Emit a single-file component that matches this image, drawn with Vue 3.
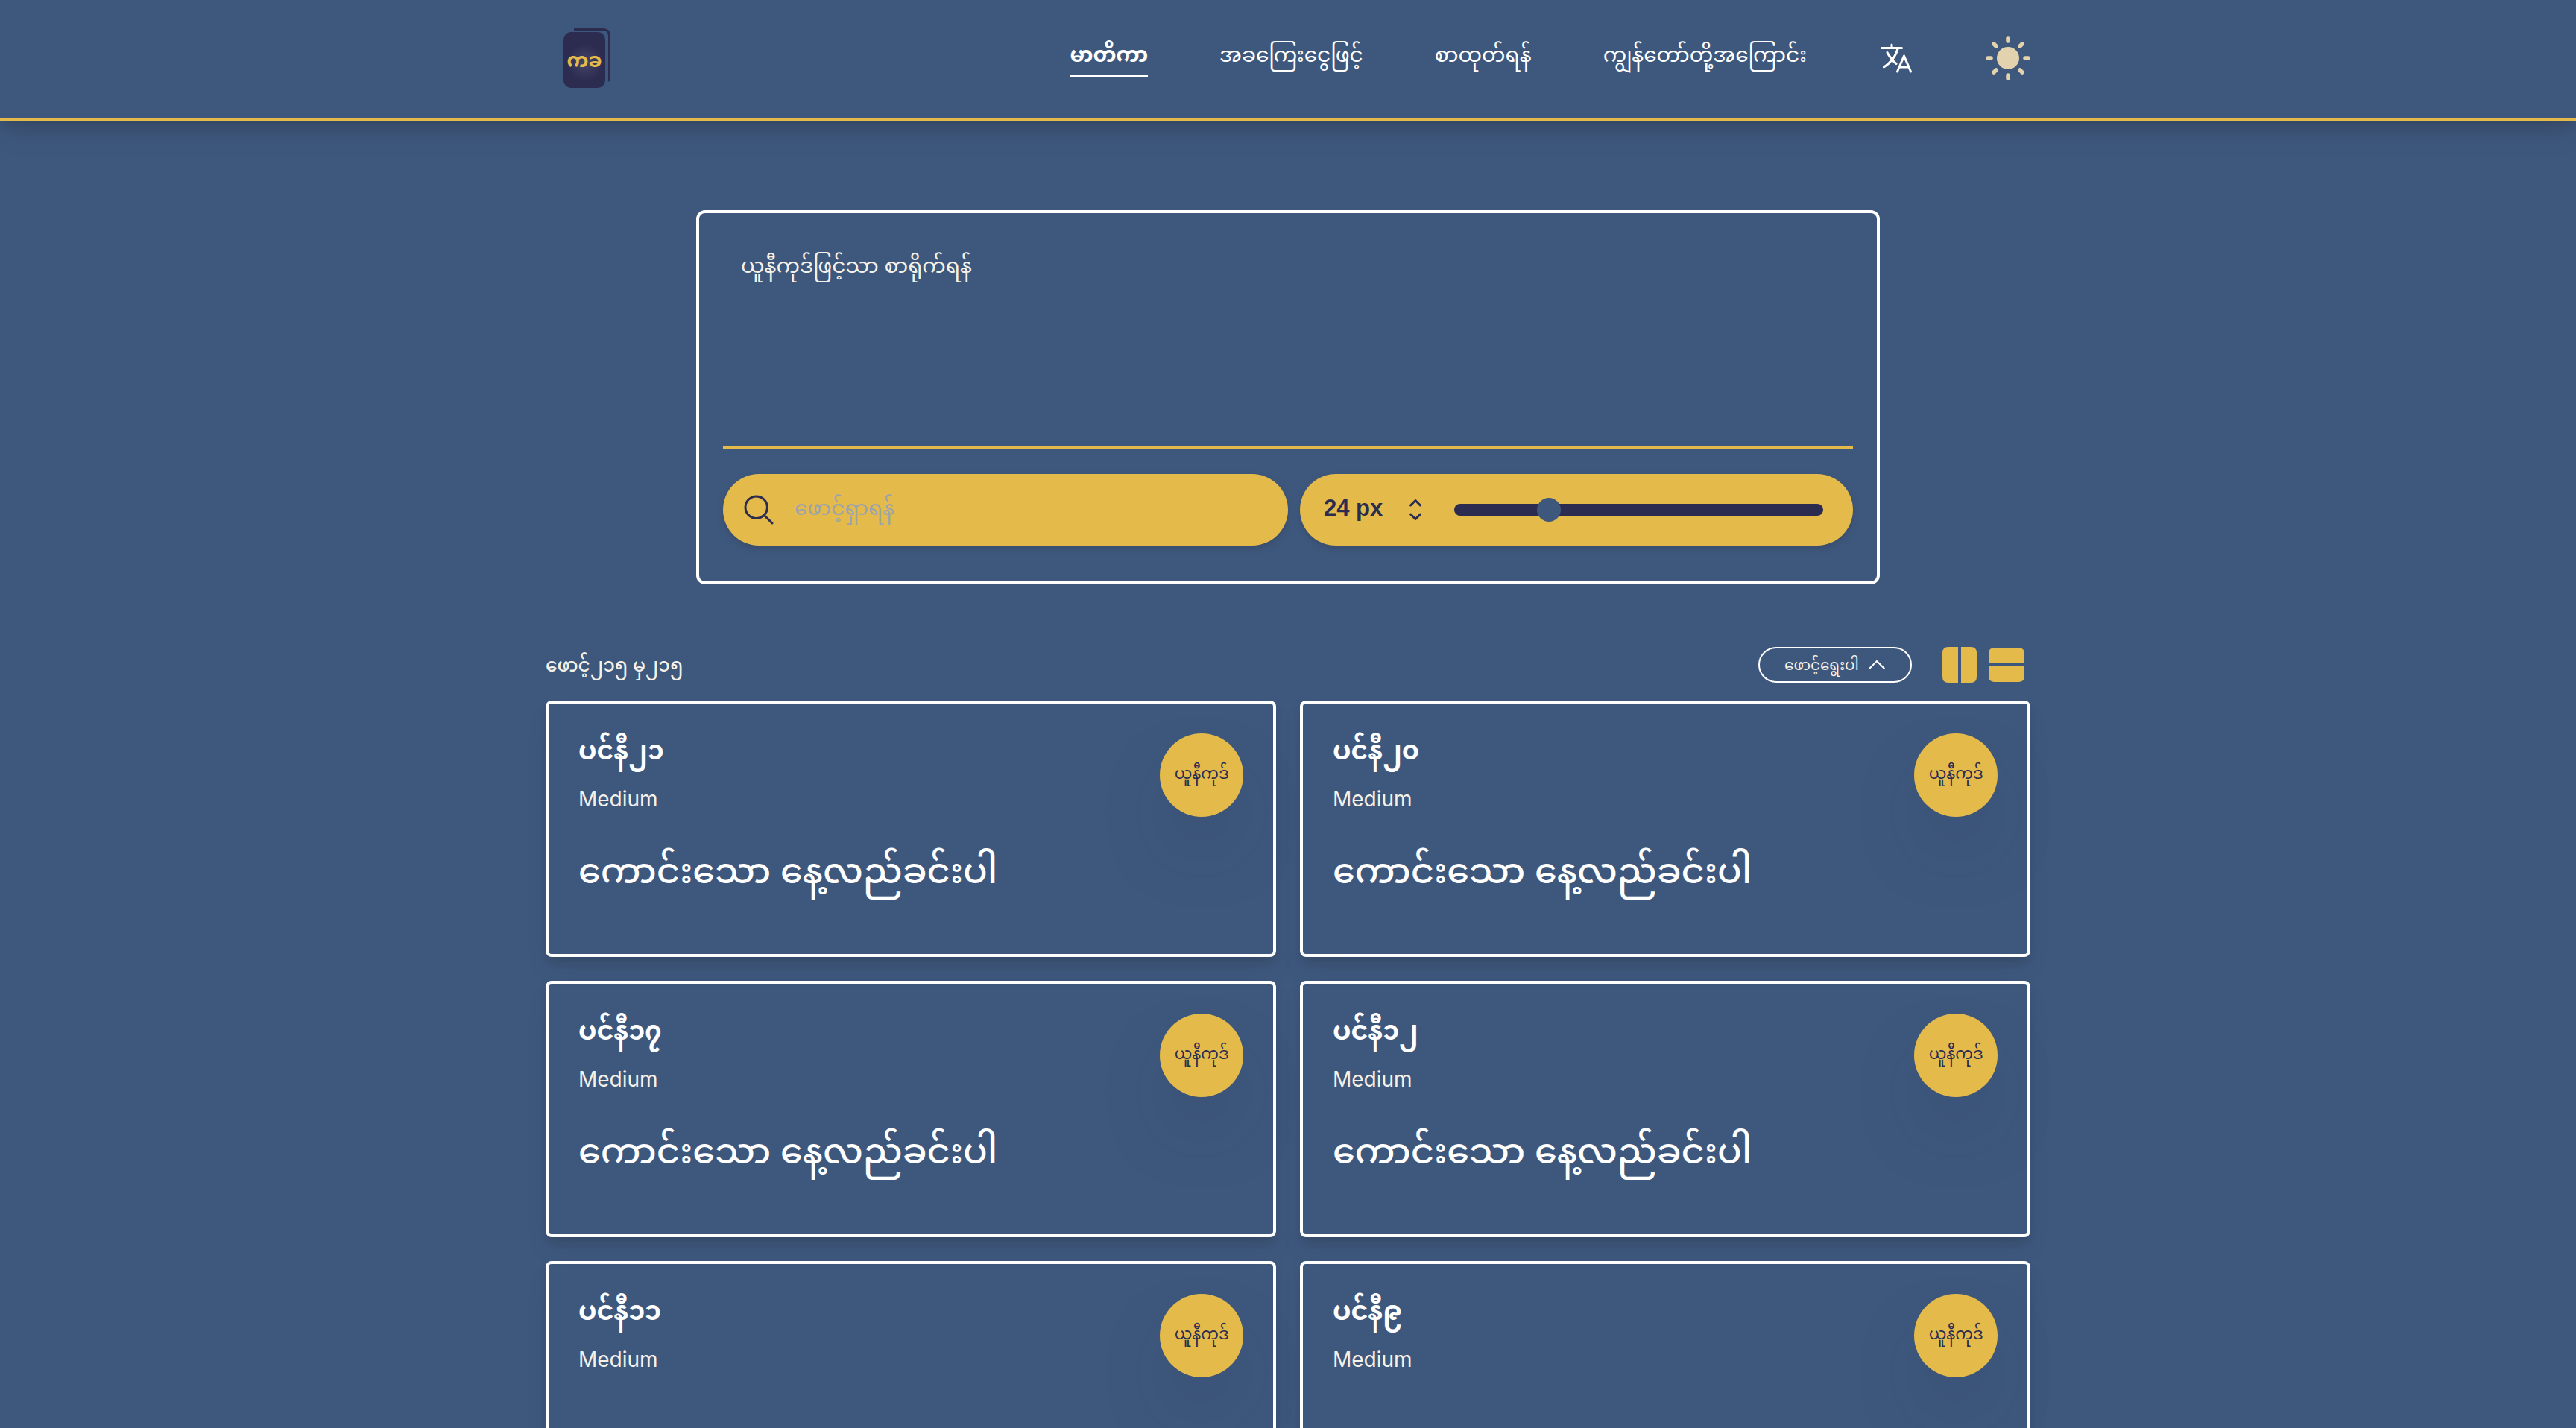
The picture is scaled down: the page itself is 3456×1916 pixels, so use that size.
<script setup>
import { ref } from 'vue'

const links = [
  { label: 'မာတိကာ', active: true },
  { label: 'အခကြေးငွေဖြင့်' },
  { label: 'စာထုတ်ရန်' },
  { label: 'ကျွန်တော်တို့အကြောင်း' },
]
const sample = 'ကောင်းသော နေ့လည်ခင်းပါ'
const fonts = [
  { name: 'ပင်နီ၂၁', sample },
  { name: 'ပင်နီ၂၀', sample },
  { name: 'ပင်နီ၁၇', sample },
  { name: 'ပင်နီ၁၂', sample },
  { name: 'ပင်နီ၁၁' },
  { name: 'ပင်နီ၉' },
]
const sizes = [16, 20, 24, 32, 48]
const size = ref(24)
const text = ref('')
const query = ref('')
</script>

<template>
  <div class="page">
    <header class="header">
      <div class="wrap bar">
        <a href="#" class="logo" aria-label="ကခ">
          <svg width="64" height="80" viewBox="0 0 64 80">
            <defs>
              <radialGradient id="glow">
                <stop offset="0" stop-color="#45446a" />
                <stop offset="1" stop-color="#2b2c50" />
              </radialGradient>
            </defs>
            <path d="M14 1.5H53Q61.500 1.500 61.500 10V68Q61.500 70 60.500 71" fill="none" stroke="#2b2c50" stroke-width="3" />
            <rect y="5" width="56" height="75" rx="10" fill="#2b2c50" />
            <ellipse cx="29" cy="46" rx="24" ry="25" fill="url(#glow)" />
            <text x="28" y="52" text-anchor="middle" class="logo-text">ကခ</text>
          </svg>
        </a>
        <nav class="nav">
          <a v-for="l in links" :key="l.label" href="#" :class="['link', { active: l.active }]">{{ l.label }}</a>
          <button class="icon-btn" aria-label="Language">
            <svg width="48" height="48" viewBox="0 0 512 512" fill="none" stroke="#fff" stroke-width="32" stroke-linecap="round" stroke-linejoin="round">
              <path d="M48 112h288M192 64v48M272 448l96-224 96 224M301.500 384h133M281.300 112S257 206 199 277 80 384 80 384" />
              <path d="M256 336s-35-27-72-75-56-85-56-85" />
            </svg>
          </button>
          <button class="icon-btn" aria-label="Theme">
            <svg width="60" height="60" viewBox="-30 -30 60 60" fill="#e2d3ae" stroke="#e2d3ae" stroke-width="5.500" stroke-linecap="round">
              <circle r="15" stroke="none" />
              <path d="M0-27V-23M0 23V27M-27 0H-23M23 0H27M-19-19L-16-16M19-19L16-16M-19 19L-16 16M19 19L16 16" />
            </svg>
          </button>
        </nav>
      </div>
    </header>

    <main class="wrap">
      <section class="panel">
        <textarea v-model="text" class="editor" placeholder="ယူနီကုဒ်ဖြင့်သာ စာရိုက်ရန်" aria-label="ယူနီကုဒ်ဖြင့်သာ စာရိုက်ရန်"></textarea>
        <div class="controls">
          <label class="pill search">
            <svg width="48" height="48" viewBox="0 0 512 512" fill="none" stroke="#2b2c50" stroke-width="32" stroke-linecap="round">
              <circle cx="221" cy="221" r="157" />
              <path d="M338 338L448 448" />
            </svg>
            <input v-model="query" type="text" placeholder="ဖောင့်ရှာရန်" aria-label="ဖောင့်ရှာရန်" />
          </label>
          <div class="pill sizing">
            <div class="picker">
              <select v-model="size" aria-label="Size">
                <option v-for="s in sizes" :key="s" :value="s">{{ s }} px</option>
              </select>
              <svg width="32" height="32" viewBox="0 0 32 32" fill="none" stroke="#2b2c50" stroke-width="3" stroke-linecap="round" stroke-linejoin="round">
                <path d="M9.500 10L16 3.500L22.500 10M9.500 22L16 28.500L22.500 22" />
              </svg>
            </div>
            <input v-model.number="size" class="slider" type="range" min="0" max="100" aria-label="Size" />
          </div>
        </div>
      </section>

      <div class="meta">
        <p class="count">ဖောင့်၂၁၅ မှ၂၁၅</p>
        <div class="tools">
          <button class="filter">
            ဖောင့်ရွေးပါ
            <svg width="24" height="24" viewBox="0 0 24 24" fill="none" stroke="#fff" stroke-width="2" stroke-linecap="round" stroke-linejoin="round">
              <path d="M2 17L12 7L22 17" />
            </svg>
          </button>
          <button class="icon-btn" aria-label="Columns">
            <svg width="46" height="48" viewBox="0 0 46 48" fill="#e4bb4b">
              <path d="M21 0V48H8Q0 48 0 40V8Q0 0 8 0ZM25 0H38Q46 0 46 8V40Q46 48 38 48H25Z" />
            </svg>
          </button>
          <button class="icon-btn" aria-label="Rows">
            <svg width="48" height="46" viewBox="0 0 48 46" fill="#e4bb4b">
              <path d="M0 21V8Q0 0 8 0H40Q48 0 48 8V21ZM0 25H48V38Q48 46 40 46H8Q0 46 0 38Z" />
            </svg>
          </button>
        </div>
      </div>

      <section class="grid">
        <article v-for="f in fonts" :key="f.name" class="card">
          <div>
            <h2>{{ f.name }}</h2>
            <p class="weight">Medium</p>
            <p v-if="f.sample" class="sample">{{ f.sample }}</p>
          </div>
          <span class="badge">ယူနီကုဒ်</span>
        </article>
      </section>
    </main>
  </div>
</template>

<style>
html,
body {
  background: #3e587d;
  overflow: hidden;
}
</style>

<style scoped>
* {
  box-sizing: border-box;
}
.page {
  height: 100vh;
  overflow: hidden;
  color: #fff;
  background: #3e587d;
  font-family: Inter, "Noto Sans Myanmar", "Noto Sans", sans-serif;
}
button,
input,
select,
textarea {
  font-family: inherit;
  color: inherit;
  background: none;
  border: 0;
  padding: 0;
  margin: 0;
  outline: 0;
}
svg {
  display: block;
  flex: none;
}
.wrap {
  width: 100%;
  max-width: 1992px;
  margin: 0 auto;
}
.header {
  border-bottom: 4px solid #e4bb4b;
  box-shadow: 0 20px 30px -6px rgba(43, 44, 60, 0.25), 0 8px 12px -4px rgba(43, 44, 60, 0.25);
}
.bar {
  height: 158px;
  padding-bottom: 2px;
  display: flex;
  align-items: center;
  justify-content: space-between;
}
.logo {
  padding-left: 24px;
}
.logo-text {
  font-size: 26px;
  font-weight: 700;
  fill: #e4bb4b;
}
.nav {
  display: flex;
  align-items: center;
  gap: 96px;
}
.link {
  margin-bottom: 8px;
  color: #fff;
  font-size: 28px;
  font-weight: 400;
  line-height: 56px;
  white-space: nowrap;
  text-decoration: none;
  border-bottom: 2px solid transparent;
}
.link.active {
  font-weight: 700;
  border-color: #fff;
}
.panel {
  max-width: 1588px;
  margin: 120px auto 84px;
  padding: 32px 32px 48px;
  border: 4px solid #fff;
  border-radius: 12px;
}
.editor {
  display: block;
  width: 100%;
  height: 284px;
  padding: 6px 24px;
  border-bottom: 4px solid #e4bb4b;
  font-size: 28px;
  line-height: 64px;
  resize: none;
}
.editor::placeholder {
  color: #f5f1e8;
  opacity: 1;
}
.controls {
  display: flex;
  gap: 16px;
  margin-top: 34px;
}
.pill {
  height: 96px;
  display: flex;
  align-items: center;
  border-radius: 48px;
  background: #e4bb4b;
  color: #2b2c50;
  box-shadow: 0 4px 8px rgba(43, 44, 60, 0.25);
}
.search {
  flex: 0 0 50%;
  gap: 24px;
  padding: 0 24px;
}
.search input {
  flex: 1;
  min-width: 0;
  height: 64px;
  padding-bottom: 6px;
  font-size: 28px;
}
.search input::placeholder {
  color: #9ca3af;
  opacity: 1;
}
.sizing {
  flex: 1;
  min-width: 0;
  gap: 36px;
  padding: 0 40px 0 32px;
}
.picker {
  display: flex;
  align-items: center;
  gap: 24px;
}
.picker select {
  appearance: none;
  width: 83px;
  height: 64px;
  padding-bottom: 6px;
  font-family: "Liberation Sans", sans-serif;
  font-size: 31px;
  font-weight: 700;
}
.slider {
  appearance: none;
  flex: 1;
  min-width: 0;
  height: 16px;
  border-radius: 8px;
  background: #2b2c50;
}
.slider::-webkit-slider-thumb {
  appearance: none;
  width: 32px;
  height: 32px;
  border-radius: 50%;
  background: #3e587d;
}
.meta {
  display: flex;
  align-items: center;
  justify-content: space-between;
  height: 48px;
  margin-bottom: 24px;
  padding-right: 8px;
  color: #f5f1e8;
}
.count {
  margin: 0;
  font-size: 25px;
  font-weight: 500;
  line-height: 48px;
}
.tools {
  display: flex;
  align-items: center;
  gap: 16px;
}
.filter {
  display: flex;
  align-items: center;
  justify-content: center;
  gap: 12px;
  min-width: 206px;
  height: 48px;
  margin-right: 25px;
  border: 2px solid #fff;
  border-radius: 24px;
  font-size: 20px;
  line-height: 40px;
}
.grid {
  display: grid;
  grid-template-columns: 1fr 1fr;
  gap: 32px;
}
.card {
  display: flex;
  justify-content: space-between;
  min-height: 344px;
  padding: 40px;
  border: 4px solid #fff;
  border-radius: 8px;
  box-shadow: 0 20px 30px -6px rgba(43, 44, 60, 0.15), 0 8px 12px -4px rgba(43, 44, 60, 0.25);
}
.card h2 {
  margin: 0;
  font-size: 35px;
  font-weight: 700;
  line-height: 44px;
}
.weight {
  margin: 24px 0 0;
  color: #f5f1e8;
  font-size: 28px;
  line-height: 40px;
}
.sample {
  margin: 36px 0 0;
  font-size: 48px;
  font-weight: 500;
  line-height: 80px;
}
.badge {
  display: flex;
  flex: none;
  align-items: center;
  justify-content: center;
  width: 112px;
  height: 112px;
  border-radius: 50%;
  background: #e4bb4b;
  color: #2b2c50;
  font-size: 21px;
  box-shadow: 0 50px 100px -24px rgba(43, 44, 80, 0.4);
}
</style>
